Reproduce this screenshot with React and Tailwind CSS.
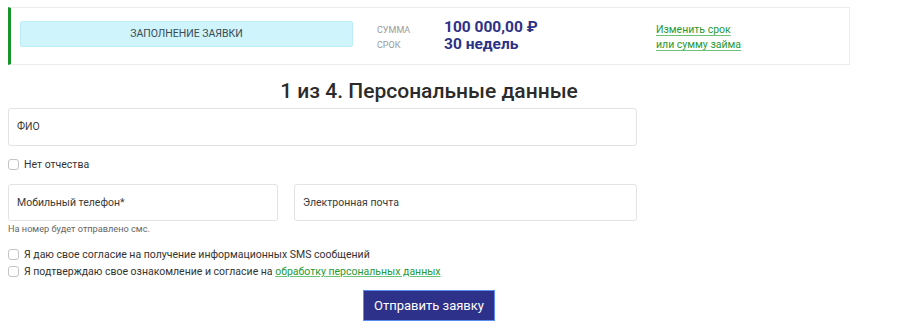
const Check = ({ children }) => (
  <label className="flex items-center gap-[5px] text-[10.5px] text-[#333] leading-[17px]">
    <span className="w-[11px] h-[11px] rounded-[3px] border border-[#c4c4c4] bg-white shrink-0" />
    <span>{children}</span>
  </label>
);

const Field = ({ label, className = '' }) => (
  <div className={`border border-[#e3e3e3] rounded-[3px] bg-white flex items-center px-[8px] text-[10.5px] text-[#3a3a3a] ${className}`}>
    {label}
  </div>
);

export default function App() {
  return (
    <div className="w-[900px] h-[327px] bg-white overflow-hidden font-['Roboto',sans-serif] text-[#333]">
      <div className="w-[842px] ml-[8px] pt-[7px]">
        <div className="h-[58px] border border-[#ececec] border-l-[3px] border-l-[#17942a] flex items-start pt-[13px] pl-[9px]">
          <div className="w-[333px] h-[26px] bg-[#cff4fc] border border-[#bdeef8] rounded-[2px] flex items-center justify-center text-[10.5px] text-[#3a4a55] uppercase">
            Заполнение заявки
          </div>
          <div className="w-[67px] ml-[24px] mt-[2px] flex flex-col text-[9px] text-[#9a9a9a] leading-[15px]">
            <span>СУММА</span>
            <span>СРОК</span>
          </div>
          <div className="w-[212px] -mt-[2px] flex flex-col text-[15.5px] font-bold text-[#2d3185] leading-[17px]">
            <span>100 000,00 ₽</span>
            <span>30 недель</span>
          </div>
          <div className="mt-[1px] flex flex-col text-[10.5px] leading-[15px]">
            <a href="#" className="text-[#1f9a34] underline underline-offset-2 decoration-[#6cc17b]">Изменить срок</a>
            <a href="#" className="text-[#1f9a34] underline underline-offset-2 decoration-[#6cc17b]">или сумму займа</a>
          </div>
        </div>

        <h1 className="text-center text-[21px] font-medium text-[#2b2b2b] leading-[24px] mt-[14px] mb-[5px]">
          1 из 4. Персональные данные
        </h1>

        <div className="w-[629px]">
          <Field label="ФИО" className="h-[38px]" />
          <div className="mt-[10px]">
            <Check>Нет отчества</Check>
          </div>
          <div className="mt-[11px] flex gap-[16px]">
            <Field label="Мобильный телефон*" className="w-[270px] h-[37px]" />
            <Field label="Электронная почта" className="flex-1 h-[37px]" />
          </div>
          <div className="text-[9.2px] text-[#666] leading-[14px] mt-[1px]">На номер будет отправлено смс.</div>
          <div className="mt-[10px] flex flex-col">
            <Check>Я даю свое согласие на получение информационных SMS сообщений</Check>
            <Check>
              Я подтверждаю свое ознакомление и согласие на{' '}
              <a href="#" className="text-[#1f9a34] underline decoration-[#6cc17b]">обработку персональных данных</a>
            </Check>
          </div>
        </div>

        <div className="flex justify-center mt-[10px]">
          <button className="w-[132px] h-[31px] bg-[#2e3189] border border-[#5b8cf0] text-white text-[13px] leading-none">
            Отправить заявку
          </button>
        </div>
      </div>
    </div>
  );
}
